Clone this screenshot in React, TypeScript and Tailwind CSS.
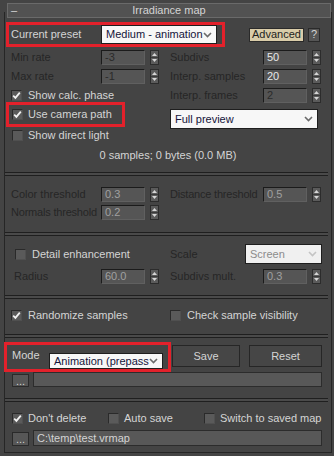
import React from 'react';

const on = 'text-[#d4d4d4]';
const off = 'text-[#262626]';

const Arrows = () => (
  <svg width="9" height="15" viewBox="0 0 9 15" className="shrink-0">
    <rect x="0.5" y="0.5" width="8" height="14" fill="#5b5b5b" stroke="#2c2c2c" />
    <line x1="1" y1="7.5" x2="8" y2="7.5" stroke="#3a3a3a" />
    <path d="M2 6 L4.5 3 L7 6Z" fill="#d6d6d6" />
    <path d="M2 9 L7 9 L4.5 12Z" fill="#d6d6d6" />
  </svg>
);

const Spin = ({ value, color }: { value: string; color: string }) => (
  <div className="flex items-center gap-[5px]">
    <div
      className={`w-[44px] h-[15px] bg-[#555555] border border-[#1b1b1b] border-r-[#606060] border-b-[#606060] pl-[3px] flex items-center text-[11px] leading-[13px] ${color}`}
    >
      {value}
    </div>
    <Arrows />
  </div>
);

const Check = ({ checked }: { checked?: boolean }) => (
  <div className="w-[11px] h-[11px] shrink-0 bg-[#5a5a5a] border border-[#2a2a2a] border-r-[#505050] border-b-[#505050] flex items-center justify-center">
    {checked && (
      <svg width="9" height="9" viewBox="0 0 9 9">
        <path d="M1.2 4.6 L3.4 6.8 L7.8 1.6" fill="none" stroke="#f2f2f2" strokeWidth="1.8" />
      </svg>
    )}
  </div>
);

const Chevron = ({ color = '#6a6a6a' }: { color?: string }) => (
  <svg width="9" height="6" viewBox="0 0 9 6" className="shrink-0">
    <path d="M1 1 L4.5 4.5 L8 1" fill="none" stroke={color} strokeWidth="1.6" />
  </svg>
);

const Drop = ({ text, w, h, disabled }: { text: string; w: string; h: string; disabled?: boolean }) => (
  <div
    className={`${w} ${h} ${disabled ? 'bg-[#f0f0f0] text-[#8c8c8c]' : 'bg-[#f7f7f7] text-[#14143a]'} border border-[#1e1e1e] flex items-center justify-between pl-[4px] pr-[4px] text-[11px] leading-[13px] whitespace-nowrap`}
  >
    <span>{text}</span>
    <Chevron color={disabled ? '#c4c4c4' : '#6a6a6a'} />
  </div>
);

const Sep = () => <div className="w-[323px] h-[4px] border-y border-[#1f1f1f] bg-[#4a4a4a]" />;

const Row = ({ children, className = '' }: { children: React.ReactNode; className?: string }) => (
  <div className={`flex items-center ${className}`}>{children}</div>
);

export default function App() {
  return (
    <div className="w-[334px] h-[456px] bg-[#444444] overflow-hidden pt-[3px] font-['Liberation_Sans',Arial,sans-serif] text-[11px] leading-[13px] select-none">
      <div className="ml-[7px] w-[324px] h-[15px] bg-[#525252] border border-[#6a6a6a] relative z-10 flex items-center">
        <span className={`w-[20px] pl-[3px] ${on}`}>–</span>
        <span className={`flex-1 text-center pr-[20px] ${on}`}>Irradiance map</span>
      </div>
      <div className="ml-[4px] w-[328px] h-[441px] -mt-[6px] border-l border-r border-b border-[#262626] pt-[10px]">
        {/* preset */}
        <Row className="h-[25px] ml-[1px]">
          <div className="w-[219px] h-[25px] border-[3px] border-[#e3212b] flex items-center">
            <div className={`w-[92px] pl-[2px] ${on}`}>Current preset</div>
            <Drop text="Medium - animation" w="w-[116px]" h="h-[19px]" />
          </div>
          <div className="ml-[24px] w-[55px] h-[14px] bg-[#d9cca9] border border-[#2a2a2a] text-[#1e1e1e] flex items-center justify-center">
            Advanced
          </div>
          <div className={`ml-[4px] w-[12px] h-[14px] bg-[#555555] border border-[#2a2a2a] flex items-center justify-center ${on}`}>
            ?
          </div>
        </Row>

        <Row className="h-[15px] mt-[3px]">
          <div className="w-[165px] pl-[6px] flex items-center">
            <div className={`w-[90px] ${off}`}>Min rate</div>
            <Spin value="-3" color="text-[#2a2a2a]" />
          </div>
          <div className={`w-[93px] ${off}`}>Subdivs</div>
          <Spin value="50" color="text-[#e8e8e8]" />
        </Row>

        <Row className="h-[15px] mt-[4px]">
          <div className="w-[165px] pl-[6px] flex items-center">
            <div className={`w-[90px] ${off}`}>Max rate</div>
            <Spin value="-1" color="text-[#2a2a2a]" />
          </div>
          <div className={`w-[93px] ${off}`}>Interp. samples</div>
          <Spin value="20" color="text-[#e8e8e8]" />
        </Row>

        <Row className="h-[15px] mt-[4px]">
          <div className="w-[165px] pl-[6px] flex items-center gap-[6px]">
            <Check checked />
            <span className={on}>Show calc. phase</span>
          </div>
          <div className={`w-[93px] ${off}`}>Interp. frames</div>
          <Spin value="2" color="text-[#2a2a2a]" />
        </Row>

        <div className="flex items-start -mt-[1px]">
          <div className="w-[165px] pl-[1px]">
            <div className="w-[119px] h-[25px] border-[3px] border-[#e3212b] flex items-center pl-[3px] gap-[5px]">
              <Check checked />
              <span className={on}>Use camera path</span>
            </div>
          </div>
          <div className="mt-[7px]">
            <Drop text="Full preview" w="w-[148px]" h="h-[20px]" />
          </div>
        </div>

        <Row className="h-[11px] mt-[1px] pl-[7px] gap-[5px]">
          <Check />
          <span className={on}>Show direct light</span>
        </Row>

        <div className={`h-[13px] mt-[8px] text-center ${on}`}>0 samples; 0 bytes (0.0 MB)</div>

        <div className="mt-[10px]">
          <Sep />
        </div>

        <Row className="h-[15px] mt-[11px]">
          <div className="w-[165px] pl-[6px] flex items-center">
            <div className={`w-[90px] ${off}`}>Color threshold</div>
            <Spin value="0.3" color="text-[#a0a0a0]" />
          </div>
          <div className={`w-[93px] tracking-[-0.2px] ${off}`}>Distance threshold</div>
          <Spin value="0.5" color="text-[#a0a0a0]" />
        </Row>

        <Row className="h-[15px] mt-[3px]">
          <div className="w-[165px] pl-[6px] flex items-center">
            <div className={`w-[90px] whitespace-nowrap tracking-[-0.2px] ${off}`}>Normals threshold</div>
            <Spin value="0.2" color="text-[#a0a0a0]" />
          </div>
        </Row>

        <div className="mt-[12px]">
          <Sep />
        </div>

        <Row className="h-[20px] mt-[8px]">
          <div className="w-[165px] pl-[10px] flex items-center gap-[6px]">
            <Check />
            <span className={on}>Detail enhancement</span>
          </div>
          <div className={`w-[75px] ${off}`}>Scale</div>
          <Drop text="Screen" w="w-[77px]" h="h-[20px]" disabled />
        </Row>

        <Row className="h-[15px] mt-[5px]">
          <div className="w-[165px] pl-[9px] flex items-center">
            <div className={`w-[87px] ${off}`}>Radius</div>
            <Spin value="60.0" color="text-[#a0a0a0]" />
          </div>
          <div className={`w-[93px] ${off}`}>Subdivs mult.</div>
          <Spin value="0.3" color="text-[#a0a0a0]" />
        </Row>

        <div className="mt-[11px]">
          <Sep />
        </div>

        <Row className="h-[11px] mt-[11px]">
          <div className="w-[165px] pl-[6px] flex items-center gap-[6px]">
            <Check checked />
            <span className={on}>Randomize samples</span>
          </div>
          <div className="flex items-center gap-[6px]">
            <Check />
            <span className={on}>Check sample visibility</span>
          </div>
        </Row>

        <div className="mt-[13px]">
          <Sep />
        </div>

        <div className="flex items-start mt-[4px] -ml-[1px]">
          <div className="w-[167px] h-[30px] border-[3px] border-[#e3212b] flex items-start">
            <div className={`w-[42px] pl-[5px] mt-[4px] ${on}`}>Mode</div>
            <div className="mt-[8px]">
              <Drop text="Animation (prepass" w="w-[114px]" h="h-[16px]" />
            </div>
          </div>
          <div className={`mt-[3px] ml-[1px] w-[68px] h-[22px] bg-[#464646] border border-[#262626] flex items-center justify-center ${on}`}>
            Save
          </div>
          <div className={`mt-[3px] ml-[9px] w-[73px] h-[22px] bg-[#464646] border border-[#262626] flex items-center justify-center ${on}`}>
            Reset
          </div>
        </div>

        <Row className="h-[15px] pl-[7px]">
          <div className={`w-[17px] h-[13px] mt-[2px] bg-[#575757] border border-[#2a2a2a] flex items-center justify-center leading-[8px] ${on}`}>
            ...
          </div>
          <div className="ml-[4px] w-[289px] h-[15px] bg-[#585858] border border-[#2c2c2c]" />
        </Row>

        <div className="mt-[11px]">
          <Sep />
        </div>

        <Row className="h-[11px] mt-[11px]">
          <div className="w-[103px] pl-[7px] flex items-center gap-[5px]">
            <Check checked />
            <span className={on}>Don't delete</span>
          </div>
          <div className="w-[96px] flex items-center gap-[5px]">
            <Check />
            <span className={on}>Auto save</span>
          </div>
          <div className="flex items-center gap-[5px]">
            <Check />
            <span className={on}>Switch to saved map</span>
          </div>
        </Row>

        <Row className="h-[16px] mt-[6px] pl-[7px]">
          <div className={`w-[17px] h-[14px] mt-[2px] bg-[#575757] border border-[#2a2a2a] flex items-center justify-center leading-[8px] ${on}`}>
            ...
          </div>
          <div className={`ml-[4px] w-[289px] h-[16px] bg-[#585858] border border-[#2c2c2c] flex items-center pl-[3px] ${on}`}>
            {'C:\\temp\\test.vrmap'}
          </div>
        </Row>
      </div>
    </div>
  );
}
